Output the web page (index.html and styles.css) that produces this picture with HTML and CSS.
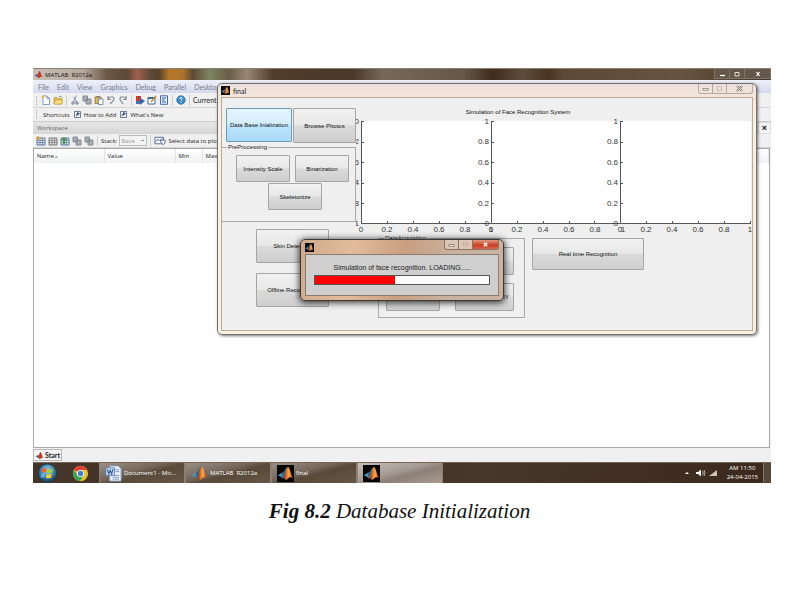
FILE: index.html
```html
<!DOCTYPE html>
<html lang="en">
<head>
<meta charset="utf-8">
<title>Fig 8.2 Database Initialization</title>
<link rel="stylesheet" href="styles.css">
</head>
<body>
<svg class="defs" aria-hidden="true">
  <defs>
    <linearGradient id="peak" x1="0" x2="1"><stop offset="0" stop-color="#7a1f12"/><stop offset=".45" stop-color="#f08a2c"/><stop offset=".6" stop-color="#f9a64a"/><stop offset="1" stop-color="#c0341a"/></linearGradient>
    <radialGradient id="orb" cx=".5" cy=".35" r=".65"><stop offset="0" stop-color="#9fd3e6"/><stop offset=".55" stop-color="#3f86ab"/><stop offset="1" stop-color="#153e5c"/></radialGradient>
    <symbol id="matlab" viewBox="0 0 20 20"><path d="M1 12l5-3 4 2-3 5-2-2z" fill="#4d9fc6"/><path d="M6 9c3-1 4-6 6-7l-3 10-3 3-1-1z" fill="#2d6a92"/><path d="M7 16c2-3 3-12 6-14 2 1 4 11 6 14-3-2-4-2-6 0-2 2-3 2-4 0z" fill="url(#peak)"/></symbol>
    <symbol id="matlab-red" viewBox="0 0 20 20"><path d="M1 12l5-3 4 2-3 5-2-2z" fill="#3b6fa8"/><path d="M6 15c2-3 4-11 6-13 3 1 4 11 7 14-4-2-5-1-6 1-3 1-4 1-4-1z" fill="#c5371f"/></symbol>
    <symbol id="page" viewBox="0 0 10 10"><path d="M2 1h4l2.500 2.500V9.500H2z" fill="#fff" stroke="#6b86a8" stroke-width=".8"/><path d="M6 1v2.500h2.500" fill="none" stroke="#6b86a8" stroke-width=".8"/><circle cx="2" cy="1.800" r="1.400" fill="#efb64d"/></symbol>
    <symbol id="folder" viewBox="0 0 10 10"><path d="M1 9V2.500h3l1 1h4V9z" fill="#e9bd45" stroke="#b98d2a" stroke-width=".6"/><path d="M1 9l1.500-4H10L8.500 9z" fill="#fbe07c" stroke="#b98d2a" stroke-width=".5"/><path d="M6 1.500q2-1 3 1" fill="none" stroke="#5a8fc0"/></symbol>
    <symbol id="cut" viewBox="0 0 10 10"><path d="M6.500.5L3.500 7M3.500 2L7 7.500" stroke="#8491a3" fill="none"/><circle cx="3" cy="8" r="1.200" fill="none" stroke="#69788c"/><circle cx="7" cy="8" r="1.200" fill="none" stroke="#69788c"/></symbol>
    <symbol id="copy" viewBox="0 0 10 10"><path d="M1 1h4.500v5H1zM4 4h5v5H4z" fill="#a9adb3" stroke="#858a92"/></symbol>
    <symbol id="paste" viewBox="0 0 10 10"><path d="M1 2h6v6.500H1z" fill="#dfb960" stroke="#897244" stroke-width=".8"/><path d="M2.500 1h3v1.500h-3z" fill="#777"/><path d="M4.500 4H9v5.500H4.500z" fill="#fff" stroke="#607fa8" stroke-width=".8"/></symbol>
    <symbol id="undo" viewBox="0 0 10 10"><path d="M2 4c2-3 6-3 6 0 0 2-2 3-4 5M2 1v3.500h3" fill="none" stroke="#858990" stroke-width="1.200"/></symbol>
    <symbol id="redo" viewBox="0 0 10 10"><path d="M8 4C6 1 2 1 2 4c0 2 2 3 3 5M8 1v3.500H5" fill="none" stroke="#858990" stroke-width="1.200"/></symbol>
    <symbol id="simulink" viewBox="0 0 10 10"><path d="M1 1h5v5H1z" fill="#c63d30"/><path d="M5 3l5 3-5 4z" fill="#3465a8"/><path d="M1 6h4v3H1z" fill="#4a6fb0"/></symbol>
    <symbol id="guide" viewBox="0 0 10 10"><path d="M1 2.500h7v6.500H1z" fill="#fff" stroke="#3c6696"/><path d="M1 2.500h7v1.500H1z" fill="#3c6696"/><path d="M4 7l5-6" stroke="#c98633" stroke-width="1.400"/></symbol>
    <symbol id="report" viewBox="0 0 10 10"><path d="M1.500.8h7v8.500h-7z" fill="#e9f1ff" stroke="#3f69b0"/><path d="M3 3h4M3 5h2.500M3 7h4" stroke="#2e58a8"/></symbol>
    <symbol id="help" viewBox="0 0 10 10"><circle cx="5" cy="5" r="4.300" fill="#3489c7" stroke="#246597" stroke-width=".6"/><path d="M3.500 4q.2-1.700 1.700-1.500C7 2.700 6.500 4.300 5.200 5v1M5.200 7v1" fill="none" stroke="#fff"/></symbol>
    <symbol id="shortcut" viewBox="0 0 8 8"><path d="M.5.5h7v7h-7z" fill="#e9f0fb" stroke="#55667f"/><path d="M2.500 6q0-3 2.500-3M4 1.500L6.200 3 4 4.600z" fill="#20365f" stroke="#20365f" stroke-width=".6"/></symbol>
    <symbol id="grid" viewBox="0 0 10 10"><path d="M1 2h8v7H1z" fill="#dce6f1" stroke="#5d7896"/><path d="M1 4.500h8M1 6.500h8M4 2v7M6.500 2v7" stroke="#5d7896" stroke-width=".7"/></symbol>
    <symbol id="spark" viewBox="0 0 10 10"><path d="M0 2h4M2 0v4" stroke="#e2a021" stroke-width="1.400"/></symbol>
    <symbol id="arrow" viewBox="0 0 10 10"><path d="M1 4l3-3 3 3H5v4H3V4z" fill="#3d9a48"/></symbol>
    <symbol id="plot" viewBox="0 0 14 10"><path d="M1 1h9v7H1z" fill="#fff" stroke="#49648f"/><path d="M2 6l2-3 2 2 3-3" fill="none" stroke="#3466a8"/><path d="M7 4h5v3l-2 2-3-3z" fill="#e9eef6" stroke="#3a4d70" stroke-width=".8"/></symbol>
    <symbol id="start-orb" viewBox="0 0 22 22"><circle cx="11" cy="11" r="10" fill="url(#orb)" stroke="#183b50"/><path d="M5 6.500q3-1.600 5-.3L9.200 10.500q-2.600-1-5 0z" fill="#ee6536"/><path d="M11 6.500q3 1.500 6-.2L16 10.700q-3 1.300-5.700 0z" fill="#a6cf3c"/><path d="M4 11.600q2.600-1.200 5 0L8 16q-2.400-1-4.600.2z" fill="#52afe2"/><path d="M10.200 12q2.800 1 5.600 0l-1 4.300q-3 1.200-5.700-.2z" fill="#fbc83c"/></symbol>
    <symbol id="chrome" viewBox="0 0 20 20"><circle cx="10" cy="10" r="9" fill="#eac22c"/><path d="M10 10L2.200 5.500A9 9 0 0 1 17.800 5.500L18 6H10z" fill="#de4435"/><path d="M2.200 5.500A9 9 0 0 0 9.500 19L13.500 12 10 10 6.500 12z" fill="#3fa14f"/><circle cx="10" cy="10" r="4.200" fill="#fff"/><circle cx="10" cy="10" r="3.200" fill="#3c7fd0"/></symbol>
    <symbol id="word" viewBox="0 0 18 18"><path d="M5 1h9l3 3v13H5z" fill="#edf3fb" stroke="#8ba6ca"/><path d="M8 11h7M8 13h7M8 15h7M11 5h4M11 7h4" stroke="#7b99c6"/><path d="M1 3h9v8H1z" fill="#d5e5f7" stroke="#5d85bb"/><path d="M2.500 4.500L4 9.500 5.500 5.500 7 9.500 8.500 4.500" fill="none" stroke="#31609f" stroke-width="1.200"/></symbol>
  </defs>
</svg>

<figure class="page">
  <div class="desktop">
    <main class="app">
      <header class="app-title">
        <svg class="logo"><use href="#matlab-red"/></svg><span>MATLAB&nbsp; R2012a</span>
        <div class="app-controls">
          <button aria-label="Minimize"><svg viewBox="0 0 8 8"><path d="M2 5.500h5" stroke="#fff" stroke-width="1.300"/></svg></button>
          <button aria-label="Restore"><svg viewBox="0 0 8 8"><path d="M2 2.500h4v3.500H2z" fill="none" stroke="#e4ddd6"/></svg></button>
          <button class="wide" aria-label="Close"><svg viewBox="0 0 8 8"><path d="M2.500 2l3 4M5.500 2l-3 4" stroke="#fff" stroke-width="1.200"/></svg></button>
        </div>
      </header>
      <nav class="menu">
        <a href="#">File</a><a href="#">Edit</a><a href="#">View</a><a href="#">Graphics</a><a href="#">Debug</a><a href="#">Parallel</a><a href="#">Desktop</a>
      </nav>
      <div class="toolbar">
        <i class="grip"></i>
        <button aria-label="New"><svg><use href="#page"/></svg></button>
        <button aria-label="Open"><svg><use href="#folder"/></svg></button>
        <i class="rule"></i>
        <button aria-label="Cut"><svg><use href="#cut"/></svg></button>
        <button aria-label="Copy"><svg><use href="#copy"/></svg></button>
        <button aria-label="Paste"><svg><use href="#paste"/></svg></button>
        <button aria-label="Undo"><svg><use href="#undo"/></svg></button>
        <button aria-label="Redo"><svg><use href="#redo"/></svg></button>
        <i class="rule"></i>
        <button aria-label="Simulink"><svg><use href="#simulink"/></svg></button>
        <button aria-label="Guide"><svg><use href="#guide"/></svg></button>
        <button aria-label="Profiler"><svg><use href="#report"/></svg></button>
        <i class="rule"></i>
        <button aria-label="Help"><svg><use href="#help"/></svg></button>
        <i class="rule"></i>
        <span>Current</span>
      </div>
      <div class="shortcuts">
        <i class="grip"></i><span>Shortcuts</span>
        <a href="#"><svg><use href="#shortcut"/></svg>How to Add</a>
        <a href="#"><svg><use href="#shortcut"/></svg>What's New</a>
      </div>
      <div class="panel-title"><span>Workspace</span><button aria-label="Close workspace">×</button></div>
      <div class="toolbar workspace-tools">
        <button aria-label="New variable"><svg><use href="#grid"/><use href="#spark"/></svg></button>
        <button aria-label="Open variable" class="dim"><svg><use href="#grid"/></svg></button>
        <button aria-label="Import data"><svg><use href="#grid"/><use href="#arrow"/></svg></button>
        <button aria-label="Save"><svg><use href="#copy"/></svg></button>
        <button aria-label="Print"><svg><use href="#copy"/></svg></button>
        <i class="rule"></i>
        <label for="stack">Stack:</label>
        <select id="stack"><option>Base</option></select>
        <i class="rule"></i>
        <button class="plot-button"><svg><use href="#plot"/></svg>Select data to plot</button>
      </div>
      <div class="variables">
        <table>
          <thead><tr><th class="name">Name <small>▵</small></th><th class="value">Value</th><th class="min">Min</th><th>Max</th></tr></thead>
        </table>
      </div>
      <footer class="status"><button><svg class="logo"><use href="#matlab-red"/></svg>Start</button></footer>
    </main>

    <section class="window final">
      <header class="window-title">
        <svg class="app-icon"><use href="#matlab"/></svg><span>final</span>
        <div class="controls">
          <button aria-label="Minimize"><svg viewBox="0 0 10 8"><path d="M2 4h6v2H2z" fill="#fff" stroke="#77706d" stroke-width=".8"/></svg></button>
          <button aria-label="Maximize"><svg viewBox="0 0 10 8"><path d="M2.500 1.500h5v5h-5z" fill="none" stroke="#c5bab5"/></svg></button>
          <button class="close" aria-label="Close"><svg viewBox="0 0 10 8"><path d="M2 1l6 6M8 1L2 7" stroke="#77706d" stroke-width="2"/><path d="M2 1l6 6M8 1L2 7" stroke="#fff" stroke-width=".7"/></svg></button>
        </div>
      </header>
      <div class="canvas">
        <div class="side">
          <div class="pair top">
            <button class="btn selected">Data Base Inialization</button>
            <button class="btn browse">Browse Photos</button>
          </div>
          <fieldset class="pre">
            <legend>PreProcessing</legend>
            <div class="pair">
              <button class="btn">Intensity Scale</button>
              <button class="btn">Binarization</button>
            </div>
            <button class="btn center">Skeletonize</button>
          </fieldset>
          <div class="stack">
            <button class="btn">Skin Detection</button>
            <button class="btn">Offline Recognition</button>
          </div>
        </div>
        <div class="results">
          <svg class="plots" viewBox="0 0 396 129" role="img" aria-label="Simulation of Face Recognition System">
            <rect x="5" y="16" width="390" height="103" fill="#fff"/>
            <text class="heading" x="162" y="9">Simulation of Face Recognition System</text>
            <g class="axis">
              <path d="M5.500 16V118.500H135M5 16.500h3M5 37.500h3M5 57.500h3M5 78.500h3M5 98.500h3M31.500 119v-3M57.500 119v-3M83.500 119v-3M109.500 119v-3"/>
              <path d="M135.500 16V118.500H264M135 16.500h3M135 37.500h3M135 57.500h3M135 78.500h3M135 98.500h3M161.500 119v-3M187.500 119v-3M213.500 119v-3M238.500 119v-3"/>
              <path d="M264.500 16V118.500H395M264 16.500h3M264 37.500h3M264 57.500h3M264 78.500h3M264 98.500h3M290.500 119v-3M316.500 119v-3M342.500 119v-3M368.500 119v-3M394.500 119v-3"/>
            </g>
            <g class="ytick">
              <text x="3" y="19">0</text><text x="3" y="39">0.2</text><text x="3" y="60">0.6</text><text x="3" y="80">0.4</text><text x="3" y="101">0.8</text><text x="3" y="121">1</text>
              <text x="133" y="19">1</text><text x="133" y="39">0.8</text><text x="133" y="60">0.6</text><text x="133" y="80">0.4</text><text x="133" y="101">0.2</text><text x="133" y="121">0</text>
              <text x="262" y="19">1</text><text x="262" y="39">0.8</text><text x="262" y="60">0.6</text><text x="262" y="80">0.4</text><text x="262" y="101">0.2</text><text x="262" y="121">0</text>
            </g>
            <g class="xtick">
              <text x="5" y="127">0</text><text x="31" y="127">0.2</text><text x="57" y="127">0.4</text><text x="83" y="127">0.6</text><text x="109" y="127">0.8</text><text x="135" y="127">1</text>
              <text x="135" y="127">0</text><text x="161" y="127">0.2</text><text x="187" y="127">0.4</text><text x="213" y="127">0.6</text><text x="239" y="127">0.8</text><text x="267" y="127">1</text>
              <text x="264" y="127">0</text><text x="290" y="127">0.2</text><text x="316" y="127">0.4</text><text x="342" y="127">0.6</text><text x="368" y="127">0.8</text><text x="394" y="127">1</text>
            </g>
          </svg>
          <div class="acquire">
            <fieldset class="data">
              <legend>DataAcquisition</legend>
              <div class="data-grid">
                <button class="btn" aria-label="Start"></button>
                <button class="btn" aria-label="Stop"></button>
                <button class="btn" aria-label="Capture"></button>
                <button class="btn end">RY</button>
              </div>
            </fieldset>
            <button class="btn realtime">Real time Recognition</button>
          </div>
        </div>
      </div>
    </section>

    <section class="window loading" role="dialog" aria-labelledby="loading-text">
      <header class="window-title">
        <svg class="app-icon"><use href="#matlab"/></svg>
        <div class="controls">
          <button aria-label="Minimize"><svg viewBox="0 0 10 8"><path d="M2 4h6v2H2z" fill="#fff" stroke="#77604f" stroke-width=".8"/></svg></button>
          <button aria-label="Maximize"><svg viewBox="0 0 10 8"><path d="M2.500 2.500h5v3h-5z" fill="none" stroke="#bba594"/></svg></button>
          <button class="close" aria-label="Close"><svg viewBox="0 0 10 8"><path d="M3 2l4 4M7 2L3 6" stroke="#fff" stroke-width="1.400"/></svg></button>
        </div>
      </header>
      <div class="loading-body">
        <p id="loading-text">Simulation of face recognition. LOADING.....</p>
        <div class="bar"><div class="fill" style="width:46%"></div></div>
      </div>
    </section>

    <nav class="taskbar">
      <button class="orb" aria-label="Start"><svg><use href="#start-orb"/></svg></button>
      <button class="browser" aria-label="Chrome"><svg><use href="#chrome"/></svg></button>
      <button class="task"><svg><use href="#word"/></svg>Document1 - Mic...</button>
      <button class="task"><svg><use href="#matlab"/></svg>MATLAB&nbsp; R2012a</button>
      <button class="task black"><svg><use href="#matlab"/></svg>final</button>
      <button class="task black active" aria-label="Loading"><svg><use href="#matlab"/></svg></button>
      <div class="tray">
        <svg viewBox="0 0 34 10"><path d="M0 6l2-2 2 2z" fill="#fff"/><path d="M11 4h2l3-2.500v7L13 6h-2z" fill="#fff"/><path d="M17.500 3q1.500 2 0 4M19 2q2 3 0 6" fill="none" stroke="#d8d1ca" stroke-width=".8"/><path d="M24 8l8-6v6z" fill="#c9c2bb"/></svg>
        <time>AM 11:50<br>24-04-2015</time>
      </div>
      <button class="peek" aria-label="Show desktop"></button>
    </nav>
  </div>
  <figcaption><b>Fig 8.2</b> Database Initialization</figcaption>
</figure>
</body>
</html>
```
FILE: styles.css
```css
* { box-sizing: border-box; }
body { margin: 0; background: #fff; color: #222; font: 7px/10px Lato, "Open Sans", sans-serif; }
button { margin: 0; padding: 0; border: 0; background: none; color: inherit; font: inherit; white-space: nowrap; }
a { color: inherit; text-decoration: none; }
svg { display: block; flex: none; }
.defs { position: absolute; width: 0; height: 0; }

.page { margin: 68px 29px 0 33px; }
.desktop { position: relative; }
figcaption { margin-top: 16px; padding-right: 5px; text-align: center; font: italic 21px/24px "Liberation Serif", serif; color: #111; }

/* main application window */
.app { background: #f0f0f0; }
.logo { width: 9px; height: 9px; }
.app-title { display: flex; align-items: center; gap: 2px; height: 12px; padding-left: 1px; border-top: 1px solid #8a7f76; color: #111; font: 6px/10px "Open Sans", sans-serif;
  background: linear-gradient(90deg, #c9bfb8 0, #b5a89e 50px, #6c5845 74px, #5b4836 94px, #a05f4e 104px, #5c4936 118px, #57432e 126px, #b5772a 136px, #ad722c 150px, #5c4a36 160px, #7d8560 176px, #6a5e48 196px, #9a8674 214px, #503c2b 240px, #4a3828 320px, #77695a 350px, #665848 430px, #3e2c1c 460px, #5e4d3c 490px, #47331f 515px, #5c4936 530px, #66543f 88%, #463526 100%); }
.app-controls { display: flex; height: 10px; margin-left: auto; margin-bottom: 1px; border: 1px solid #81756a; border-top: 0; background: #65574c; }
.app-controls button { display: grid; place-items: center; width: 15px; border-right: 1px solid #81756a; }
.app-controls .wide { width: 25px; border: 0; }
.app-controls svg { width: 8px; height: 8px; }
.menu { display: flex; align-items: center; gap: 8px; height: 13px; padding-left: 5px; color: #777b8c; background: linear-gradient(#eef0f9, #d3d9ee); }
.toolbar { display: flex; align-items: center; gap: 2px; height: 15px; padding-left: 3px; border-bottom: 1px solid #d5d5d5; }
.toolbar svg { width: 10px; height: 10px; }
.grip { width: 1px; height: 9px; margin-right: 2px; border-left: 1px dotted #aaa; }
.rule { width: 1px; height: 11px; margin: 0 1px; background: #cdcdcd; }
.shortcuts { display: flex; align-items: center; gap: 4px; height: 14px; padding-left: 3px; border-bottom: 1px solid #ccc; font: 6px/10px "Open Sans", sans-serif; }
.shortcuts a { display: flex; align-items: center; gap: 3px; }
.shortcuts svg { width: 7px; height: 7px; }
.panel-title { display: flex; justify-content: space-between; height: 12px; padding-left: 4px; color: #666; background: linear-gradient(#e6e6e6, #d6d6d6); font: 6px/12px "Open Sans", sans-serif; }
.panel-title button { width: 13px; border: 1px solid #ddd; background: #f6f6f6; color: #111; font: bold 9px/9px "Liberation Sans", sans-serif; }
.workspace-tools { height: 14px; font: 6px/10px "Open Sans", sans-serif; }
.dim { filter: grayscale(1); }
.workspace-tools select { width: 28px; height: 11px; padding: 0 0 0 1px; border: 1px solid #bbb; background: #f3f3f3 linear-gradient(#999, #999) no-repeat 21px 4px / 3px 1px; color: #999; font: inherit; appearance: none; }
.plot-button { display: flex; align-items: center; gap: 1px; }
.toolbar .plot-button svg { width: 13px; }
.variables { height: 300px; margin-right: 1px; border: 1px solid #aaa; background: #fff; font: 6px/10px "Open Sans", sans-serif; }
table { width: 100%; border-collapse: collapse; table-layout: fixed; }
th { height: 14px; padding: 0 0 0 3px; border-right: 1px solid #e2e2e2; background: linear-gradient(#fff, #f1f2f3); text-align: left; font-weight: 400; }
th small { font-size: 5px; }
.name { width: 70px; }
.value { width: 71px; }
.min { width: 27px; }
.status { display: flex; align-items: center; height: 14px; }
.status button { display: flex; align-items: center; gap: 1px; height: 12px; padding: 0 1px; border: 1px solid #bbb; background: #f3f3f3; font-weight: 700; }

/* floating windows */
.window { position: absolute; border-radius: 5px; }
.window-title { display: flex; align-items: center; gap: 3px; }
.app-icon { width: 9px; height: 9px; background: #0b0b0b; }
.controls { display: flex; align-self: flex-start; height: 10px; margin-left: auto; border: 1px solid #b3a8a3; border-top: 0; border-radius: 0 0 3px 3px; overflow: hidden; }
.controls button { display: grid; place-items: center; width: 14px; border-right: 1px solid #b3a8a3; }
.controls .close { width: 25px; border-right: 0; }
.controls svg { width: 9px; height: 7px; }

.final { top: 15px; right: 14px; left: 184px; padding: 0 3px 3px; border: 1px solid #77706b; background: linear-gradient(#eadfdc, #f5e6d8 14px, #f7f1e4 30px, #f5f0df); box-shadow: 1px 1px 3px #0008; }
.final .window-title { height: 13px; }
.canvas { display: grid; grid-template-columns: 134px minmax(0, 1fr); border: 1px solid #b8aa98; background: #efefef; font: 6px/8px "Liberation Sans", sans-serif; }
.btn { border: 1px solid #a5a5a5; border-radius: 1px; background: linear-gradient(#f1f1f1 0, #e8e8e8 48%, #dadada 52%, #cecece); color: #111; text-align: center; }
.selected { border-color: #6d9cb8; background: linear-gradient(#e4f4fd, #d3edfc 48%, #bce4fb 52%, #a8d9f5); }
.side { padding-top: 10px; }
.pair { display: flex; gap: 5px; }
.top { gap: 1px; padding-left: 4px; }
.top .btn { width: 66px; height: 34px; }
.top .browse { width: 63px; height: 35px; }
fieldset { min-width: 0; margin: 0; padding: 0; border: 1px solid #aaa; }
legend { height: 8px; margin-left: 5px; padding: 0 1px; background: #efefef; }
.pre { height: 79px; border-left: 0; }
.pre .pair { padding: 4px 0 0 14px; }
.pre .btn { width: 54px; height: 27px; }
.pre .center { display: block; margin: 1px 0 0 46px; }
.stack { display: grid; gap: 10px; margin: 7px 0 0 34px; }
.stack .btn { width: 73px; height: 34px; text-align: center; }
.results { padding-top: 7px; }
.plots { width: 100%; height: auto; overflow: hidden; }
.plots text { font: 8px "Liberation Sans", sans-serif; fill: #333; }
.plots .heading { font-size: 6px; text-anchor: middle; fill: #111; }
.ytick { text-anchor: end; }
.xtick { text-anchor: middle; }
.axis { fill: none; stroke: #555; }
.acquire { display: flex; gap: 7px; padding: 0 0 12px 22px; }
.data { width: 147px; height: 84px; }
.data-grid { display: grid; grid-template-columns: 54px 59px; gap: 8px 15px; padding: 5px 0 0 7px; }
.data-grid .btn { height: 28px; }
.data-grid .end { padding-right: 4px; text-align: right; }
.realtime { width: 112px; height: 32px; margin-top: 4px; }

.loading { top: 171px; left: 267px; width: 204px; padding: 0 4px 4px; border: 1px solid #3f3732; background: linear-gradient(100deg, #cfa98c, #e1bc9c 25%, #c99f80 50%, #c7b3a2 75%, #cbb29f); box-shadow: 0 1px 6px 1px #000b; }
.loading .window-title { height: 14px; }
.loading .controls { border-color: #8b7361; background: #dcc7b6; }
.loading .controls button { border-color: #8b7361; }
.loading .controls .close { background: linear-gradient(#e39a83, #cc4a30 50%, #c3381f 52%, #d9664b); }
.loading-body { padding: 8px 8px 10px; border: 1px solid #8c7b6e; background: #cfcfcf; font: 7px/10px "Liberation Sans", sans-serif; text-align: center; }
.loading-body p { margin: 0 0 2px; }
.bar { height: 10px; border: 1px solid #555; background: #fff; }
.fill { height: 100%; background: #f00; }

/* taskbar */
.taskbar { display: flex; align-items: stretch; height: 21px; border-top: 1px solid #756554; background: linear-gradient(100deg, #46352a, #3e2d20 40%, #47362a 60%, #3a291c); color: #fff; font: 6px/9px "Open Sans", sans-serif; }
.taskbar > button { display: flex; align-items: center; }
.orb svg { width: 21px; height: 20px; }
.orb { padding-left: 4px; width: 34px; }
.browser { padding-left: 5px; width: 32px; }
.browser svg { width: 17px; height: 17px; }
.task { width: 86px; padding-left: 5px; gap: 2px; border: 1px solid #8d8073; border-width: 0 1px 0 1px; background: linear-gradient(165deg, #9b8f85, #75675b 40%, #594939 55%, #665645); }
.task svg { width: 17px; height: 17px; }
.black svg { background: #050505; }
.active { background: linear-gradient(165deg, #c5bdb6, #a69b93 45%, #8c8077 60%, #a99c91); }
.tray { display: flex; align-items: center; gap: 8px; margin-left: auto; padding-right: 5px; }
.tray svg { width: 34px; height: 10px; }
.tray time { text-align: center; }
.taskbar .peek { width: 8px; border-left: 1px solid #85776a; background: #58483b; }
```
